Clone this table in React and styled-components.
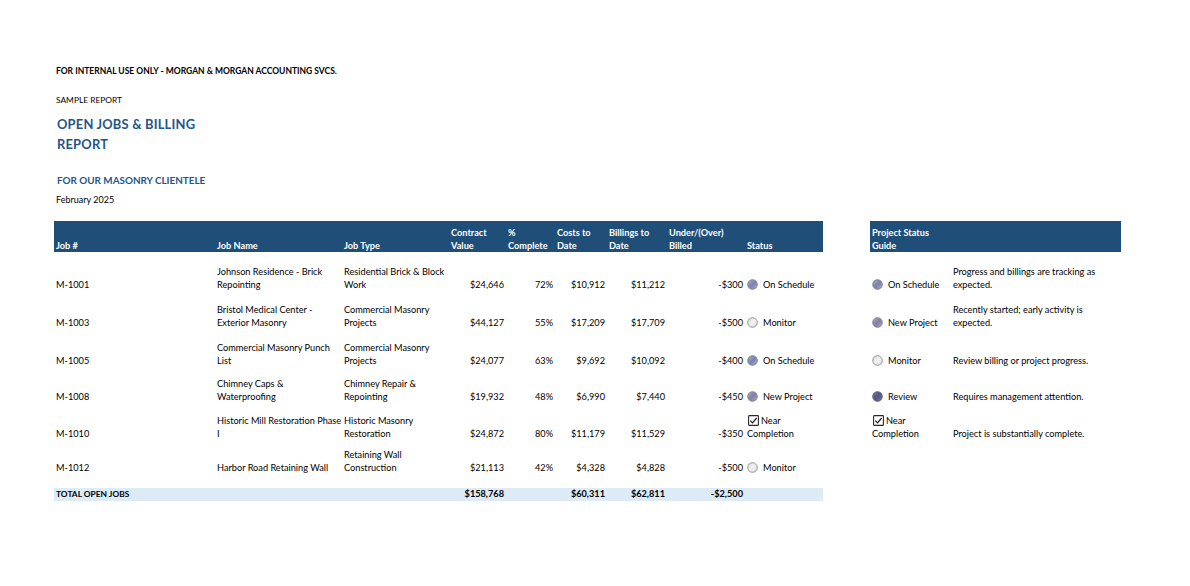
import React from "react";
import styled, { createGlobalStyle } from "styled-components";

const GlobalStyle = createGlobalStyle`
  html, body {
    margin: 0;
    padding: 0;
    background: #ffffff;
  }
  body {
    font-family: Lato, "Noto Sans", Arial, sans-serif;
    color: #000;
    -webkit-font-smoothing: antialiased;
  }
`;

const Sheet = styled.div`
  width: 1190px;
  height: 586px;
  box-sizing: border-box;
  padding: 65px 0 0 54px;
  overflow: hidden;
`;

const Notice = styled.div`
  padding-left: 2px;
  font-size: 8.5px;
  font-weight: 700;
  line-height: 12px;
`;

const Small = styled.div`
  padding-left: 2px;
  margin-top: ${(p) => p.$gap}px;
  font-size: ${(p) => p.$size || 9}px;
  line-height: 12px;
`;

const Title = styled.h1`
  margin: 8px 0 0;
  padding-left: 3px;
  font-size: 12.9px;
  font-weight: 700;
  line-height: 20px;
  letter-spacing: 0.2px;
  color: #24558a;
`;

const Subtitle = styled.h2`
  margin: 19px 0 0;
  padding-left: 3px;
  font-size: 9.9px;
  font-weight: 700;
  line-height: 14px;
  color: #24558a;
`;

const Tables = styled.div`
  display: flex;
  align-items: flex-start;
  gap: 47px;
  margin-top: 15px;
`;

const Grid = styled.table`
  border-collapse: collapse;
  table-layout: fixed;
  width: ${(p) => p.$width}px;
  font-size: 9.2px;
  line-height: 12.3px;
`;

const HeadRow = styled.tr`
  height: 31px;
  background: #1f4e78;
`;

const HeadCell = styled.th`
  padding: 0 2px;
  vertical-align: bottom;
  text-align: left;
  font-weight: 700;
  color: #ffffff;
  white-space: pre;
`;

const Row = styled.tr`
  height: ${(p) => p.$h}px;
`;

const Cell = styled.td`
  padding: 0 2px;
  vertical-align: bottom;
  text-align: ${(p) => (p.$num ? "right" : "left")};
  white-space: pre;
`;

const TotalRow = styled.tr`
  height: 13px;
  background: #ddebf7;
  font-weight: 700;
`;

const TotalCell = styled.td`
  padding: 0 2px;
  vertical-align: middle;
  text-align: ${(p) => (p.$num ? "right" : "left")};
  white-space: nowrap;
  font-size: ${(p) => (p.$label ? 8.4 : 9.2)}px;
`;

const StatusLine = styled.span`
  white-space: nowrap;
  svg {
    margin-right: 5px;
    vertical-align: -2px;
  }
`;

const CheckLine = styled.span`
  padding-left: 1px;
  svg {
    margin-right: 2px;
    vertical-align: -2px;
  }
`;

const Icon = styled.svg`
  display: inline-block;
`;

// hatched status circles, drawn as a soft blend of the two hatch colours
const STATUS = {
  onSchedule: { label: "On Schedule", a: "#7a82b4", b: "#b4b0b8", ring: "#767b96" },
  newProject: { label: "New Project", a: "#7c80b4", b: "#c8a894", ring: "#7c7c96" },
  monitor: { label: "Monitor", a: "#f2f2f2", b: "#d8d8d8", ring: "#8a8a8a" },
  review: { label: "Review", a: "#4a5594", b: "#9a7c70", ring: "#50557a" },
};

const Dot = ({ kind }) => {
  const s = STATUS[kind];
  const id = `blend-${kind}`;
  return (
    <Icon width="11" height="11" viewBox="0 0 11 11">
      <defs>
        <linearGradient id={id} x1="0" y1="0" x2="1" y2="1">
          <stop offset="0" stopColor={s.b} />
          <stop offset="0.5" stopColor={s.a} />
          <stop offset="1" stopColor={s.b} />
        </linearGradient>
      </defs>
      <circle cx="5.5" cy="5.5" r="4.8" fill={`url(#${id})`} stroke={s.ring} strokeWidth="0.9" />
    </Icon>
  );
};

const Check = () => (
  <Icon width="11" height="11" viewBox="0 0 11 11">
    <rect x="0.6" y="0.6" width="9.8" height="9.8" rx="0.6" fill="#ffffff" stroke="#2a2a2a" strokeWidth="1.1" />
    <path d="M2.3 5.6 L4.5 7.8 L8.7 3" fill="none" stroke="#1a1a1a" strokeWidth="1.2" />
  </Icon>
);

const Status = ({ kind }) =>
  kind === "near" ? (
    <>
      <CheckLine>
        <Check />
        Near
      </CheckLine>
      {"\n"}Completion
    </>
  ) : (
    <StatusLine>
      <Dot kind={kind} />
      {STATUS[kind].label}
    </StatusLine>
  );

const mainCols = [161, 127, 107, 57, 49, 52, 60, 78, 78];
const guideCols = [81, 170];

const headers = [
  "Job #",
  "Job Name",
  "Job Type",
  "Contract\nValue",
  "%\nComplete",
  "Costs to\nDate",
  "Billings to\nDate",
  "Under/(Over)\nBilled",
  "Status",
];

const jobs = [
  {
    id: "M-1001",
    name: "Johnson Residence - Brick\nRepointing",
    type: "Residential Brick & Block\nWork",
    values: ["$24,646", "72%", "$10,912", "$11,212", "-$300"],
    status: "onSchedule",
    h: 39,
  },
  {
    id: "M-1003",
    name: "Bristol Medical Center -\nExterior Masonry",
    type: "Commercial Masonry\nProjects",
    values: ["$44,127", "55%", "$17,209", "$17,709", "-$500"],
    status: "monitor",
    h: 38,
  },
  {
    id: "M-1005",
    name: "Commercial Masonry Punch\nList",
    type: "Commercial Masonry\nProjects",
    values: ["$24,077", "63%", "$9,692", "$10,092", "-$400"],
    status: "onSchedule",
    h: 38,
  },
  {
    id: "M-1008",
    name: "Chimney Caps &\nWaterproofing",
    type: "Chimney Repair &\nRepointing",
    values: ["$19,932", "48%", "$6,990", "$7,440", "-$450"],
    status: "newProject",
    h: 36,
  },
  {
    id: "M-1010",
    name: "Historic Mill Restoration Phase\nI",
    type: "Historic Masonry\nRestoration",
    values: ["$24,872", "80%", "$11,179", "$11,529", "-$350"],
    status: "near",
    h: 37,
  },
  {
    id: "M-1012",
    name: "Harbor Road Retaining Wall",
    type: "Retaining Wall\nConstruction",
    values: ["$21,113", "42%", "$4,328", "$4,828", "-$500"],
    status: "monitor",
    h: 34,
  },
];

const guide = [
  { kind: "onSchedule", text: "Progress and billings are tracking as\nexpected." },
  { kind: "newProject", text: "Recently started; early activity is\nexpected." },
  { kind: "monitor", text: "Review billing or project progress." },
  { kind: "review", text: "Requires management attention." },
  { kind: "near", text: "Project is substantially complete." },
];

const Cols = ({ widths }) => (
  <colgroup>
    {widths.map((w, i) => (
      <col key={i} style={{ width: w }} />
    ))}
  </colgroup>
);

export default function App() {
  return (
    <>
      <GlobalStyle />
      <Sheet>
        <Notice>FOR INTERNAL USE ONLY - MORGAN &amp; MORGAN ACCOUNTING SVCS.</Notice>
        <Small $gap={17} $size={8.4}>
          SAMPLE REPORT
        </Small>
        <Title>
          OPEN JOBS &amp; BILLING
          <br />
          REPORT
        </Title>
        <Subtitle>FOR OUR MASONRY CLIENTELE</Subtitle>
        <Small $gap={7}>February 2025</Small>

        <Tables>
          <Grid $width={769}>
            <Cols widths={mainCols} />
            <thead>
              <HeadRow>
                {headers.map((h) => (
                  <HeadCell key={h}>{h}</HeadCell>
                ))}
              </HeadRow>
            </thead>
            <tbody>
              {jobs.map((j) => (
                <Row key={j.id} $h={j.h}>
                  <Cell>{j.id}</Cell>
                  <Cell>{j.name}</Cell>
                  <Cell>{j.type}</Cell>
                  {j.values.map((v, i) => (
                    <Cell key={i} $num>
                      {v}
                    </Cell>
                  ))}
                  <Cell>
                    <Status kind={j.status} />
                  </Cell>
                </Row>
              ))}
              <Row $h={14}>
                <Cell colSpan={9} />
              </Row>
              <TotalRow>
                <TotalCell $label>TOTAL OPEN JOBS</TotalCell>
                <TotalCell />
                <TotalCell />
                <TotalCell $num>$158,768</TotalCell>
                <TotalCell />
                <TotalCell $num>$60,311</TotalCell>
                <TotalCell $num>$62,811</TotalCell>
                <TotalCell $num>-$2,500</TotalCell>
                <TotalCell />
              </TotalRow>
            </tbody>
          </Grid>

          <Grid $width={251}>
            <Cols widths={guideCols} />
            <thead>
              <HeadRow>
                <HeadCell>{"Project Status\nGuide"}</HeadCell>
                <HeadCell />
              </HeadRow>
            </thead>
            <tbody>
              {guide.map((g, i) => (
                <Row key={g.kind} $h={jobs[i].h}>
                  <Cell>
                    <Status kind={g.kind} />
                  </Cell>
                  <Cell>{g.text}</Cell>
                </Row>
              ))}
            </tbody>
          </Grid>
        </Tables>
      </Sheet>
    </>
  );
}
